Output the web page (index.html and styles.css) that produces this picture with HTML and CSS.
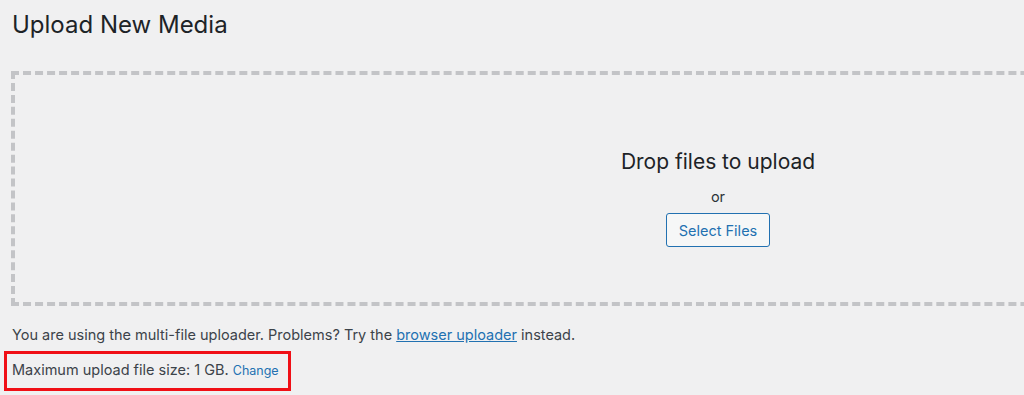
FILE: index.html
```html
<!DOCTYPE html>
<html lang="en">
<head>
    <meta charset="UTF-8">
    <meta name="viewport" content="width=device-width, initial-scale=1.0">
    <title>Upload New Media</title>
    <link rel="stylesheet" href="styles.css">
</head>
<body>
    <div class="wrap">
        <h1 class="page-title">Upload New Media</h1>

        <div class="drag-drop-area">
            <div class="drag-drop-inside">
                <p class="drag-drop-info">Drop files to upload</p>
                <p class="drag-drop-or">or</p>
                <button class="button">Select Files</button>
            </div>
        </div>

        <p class="upload-flash">You are using the multi-file uploader. Problems? Try the <a href="#" class="link">browser uploader</a> instead.</p>

        <p class="max-upload-size">Maximum upload file size: 1 GB. <a href="#" class="change-link">Change</a></p>
    </div>
</body>
</html>
```

FILE: styles.css
```css
* {
    margin: 0;
    padding: 0;
    box-sizing: border-box;
}

html, body {
    overflow: hidden;
}

body {
    font-family: Inter, 'Noto Sans', sans-serif;
    background: #f0f0f1;
    color: #3c434a;
    font-size: 14.5px;
}

.wrap {
    padding: 10px 0 0 11px;
}

.page-title {
    font-size: 24px;
    font-weight: 400;
    line-height: 30px;
    color: #1d2327;
    padding-left: 1px;
    margin-bottom: 31px;
}

.drag-drop-area {
    width: 1414px;
    height: 235px;
    border: 4px dashed #c3c4c7;
    display: flex;
    justify-content: center;
}

.drag-drop-inside {
    margin-top: 74px;
    display: flex;
    flex-direction: column;
    align-items: center;
}

.drag-drop-info {
    font-size: 21px;
    line-height: 26px;
    color: #1d2327;
}

.drag-drop-or {
    font-size: 14.5px;
    line-height: 20px;
    margin-top: 12px;
    color: #2c3338;
}

.button {
    margin-top: 6px;
    height: 34px;
    padding: 0 12px;
    font-family: inherit;
    font-size: 14.5px;
    color: #2271b1;
    background: #f6f7f7;
    border: 1px solid #2271b1;
    border-radius: 3px;
    cursor: pointer;
}

.upload-flash {
    margin-top: 19px;
    padding-left: 1px;
    line-height: 20px;
}

.link {
    color: #2271b1;
}

.max-upload-size {
    display: inline-block;
    margin: 6px 0 0 -7px;
    padding: 6px 9px 7px 5px;
    border: 3px solid #f00f16;
    line-height: 20px;
}

.change-link {
    color: #2271b1;
    font-size: 12.5px;
    text-decoration: none;
}
```
